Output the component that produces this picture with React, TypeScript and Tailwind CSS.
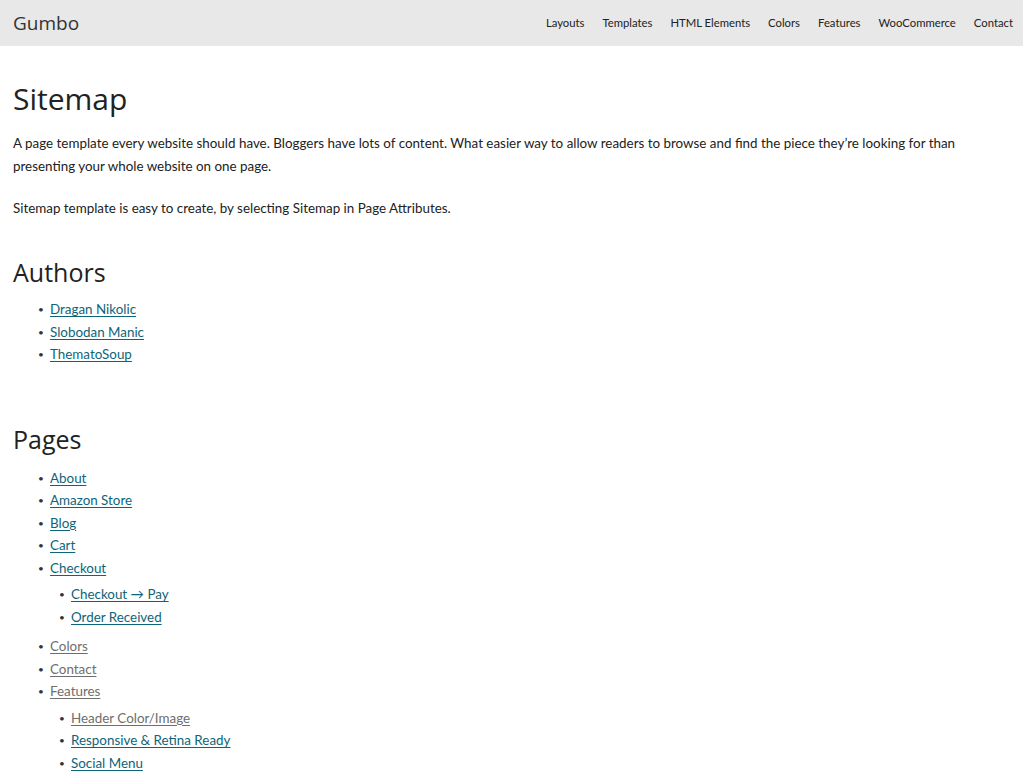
const nav = ['Layouts', 'Templates', 'HTML Elements', 'Colors', 'Features', 'WooCommerce', 'Contact'];

type Item = { label: string; visited?: boolean; children?: Item[] };

const authors: Item[] = [
  { label: 'Dragan Nikolic' },
  { label: 'Slobodan Manic' },
  { label: 'ThematoSoup' },
];

const pages: Item[] = [
  { label: 'About' },
  { label: 'Amazon Store' },
  { label: 'Blog' },
  { label: 'Cart' },
  {
    label: 'Checkout',
    children: [{ label: 'Checkout → Pay' }, { label: 'Order Received' }],
  },
  { label: 'Colors', visited: true },
  { label: 'Contact', visited: true },
  {
    label: 'Features',
    visited: true,
    children: [
      { label: 'Header Color/Image', visited: true },
      { label: 'Responsive & Retina Ready' },
      { label: 'Social Menu' },
    ],
  },
];

function LinkList({ items, nested }: { items: Item[]; nested?: boolean }) {
  return (
    <ul className={nested ? 'pl-[21px] mt-[4px] mb-[7px]' : 'pl-[37px]'}>
      {items.map((it) => (
        <li key={it.label} className="flex flex-col">
          <div className="flex items-center h-[22.5px]">
            <span className="w-[12px] shrink-0 -ml-[12px] text-[#333] text-[10px] leading-none">•</span>
            <a
              href="#"
              className={`underline underline-offset-2 ${it.visited ? 'text-[#6e6e6e]' : 'text-[#0e6479]'}`}
            >
              {it.label}
            </a>
          </div>
          {it.children && <LinkList items={it.children} nested />}
        </li>
      ))}
    </ul>
  );
}

export default function App() {
  return (
    <div className="min-h-screen bg-white text-[#222] font-['Lato',sans-serif] text-[13.4px]">
      <header className="h-[46px] bg-[#e8e8e8] flex items-center justify-between pl-[13px] pr-[10px]">
        <div className="text-[19px] text-[#333] font-['Open_Sans',sans-serif]">Gumbo</div>
        <nav className="flex items-center gap-[18px] text-[11.3px] text-[#222]">
          {nav.map((n) => (
            <a key={n} href="#">{n}</a>
          ))}
        </nav>
      </header>

      <main className="px-[13px] pt-[35px]">
        <h1 className="text-[30px] leading-[36px] font-['Open_Sans',sans-serif] text-[#222]">Sitemap</h1>
        <p className="mt-[15px] leading-[23px] max-w-[960px]">
          A page template every website should have. Bloggers have lots of content. What easier way to allow readers to browse and find the piece they’re looking for than presenting your whole website on one page.
        </p>
        <p className="mt-[19px] leading-[23px]">
          Sitemap template is easy to create, by selecting Sitemap in Page Attributes.
        </p>

        <h2 className="mt-[36px] text-[25px] leading-[32px] font-['Open_Sans',sans-serif]">Authors</h2>
        <div className="mt-[10px]">
          <LinkList items={authors} />
        </div>

        <h2 className="mt-[57px] text-[25px] leading-[32px] font-['Open_Sans',sans-serif]">Pages</h2>
        <div className="mt-[12px]">
          <LinkList items={pages} />
        </div>
      </main>
    </div>
  );
}
